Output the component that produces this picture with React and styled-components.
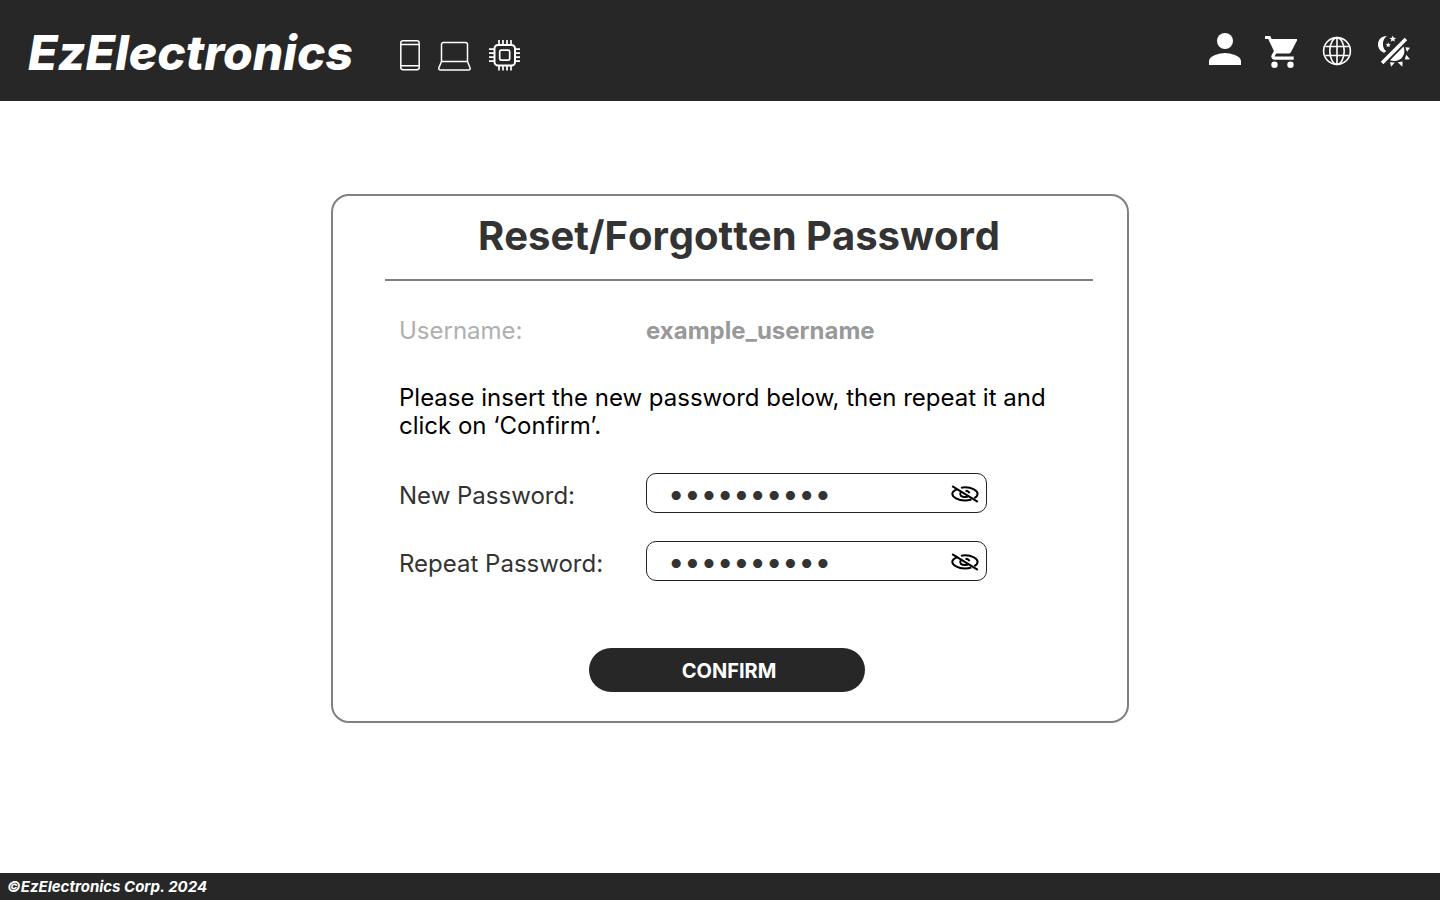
import React, { useState } from 'react';
import styled, { createGlobalStyle } from 'styled-components';

const GlobalStyle = createGlobalStyle`
  *, *::before, *::after { box-sizing: border-box; }
  body {
    margin: 0;
    background: #fff;
    color: #000;
    font-family: Inter, "Liberation Sans", sans-serif;
  }
  h1, p { margin: 0; }
`;

const Page = styled.div`
  min-height: 100vh;
  display: flex;
  flex-direction: column;
`;

const Header = styled.header`
  display: flex;
  align-items: center;
  min-height: 101px;
  padding: 4px 30px 0 28px;
  background: #272727;
`;

const Logo = styled.a`
  color: #fff;
  font-size: 48px;
  line-height: 58px;
  font-weight: 800;
  font-style: italic;
  text-decoration: none;
`;

const Categories = styled.nav`
  display: flex;
  gap: 18px;
  margin-left: 47px;
  padding-top: 6px;
`;

const CategoryLink = styled.a`
  display: flex;
  color: #fff;
`;

const Actions = styled.div`
  display: flex;
  gap: 24px;
  margin-left: auto;
  padding-bottom: 3px;
`;

const IconButton = styled.button`
  display: flex;
  padding: 0;
  border: 0;
  background: none;
  color: ${(p) => (p.$dark ? '#000' : '#fff')};
  cursor: pointer;
`;

const Main = styled.main`
  flex: 1;
  display: flex;
  justify-content: center;
  align-items: flex-start;
  padding: 93px 0 40px 20px;
`;

const Card = styled.section`
  width: 100%;
  max-width: 798px;
  padding: 16px 34px 29px 52px;
  border: 2px solid #808080;
  border-radius: 18px;
`;

const Title = styled.h1`
  padding-bottom: 19px;
  border-bottom: 2px solid #808080;
  color: #333;
  font-size: 40px;
  line-height: 48px;
  font-weight: 700;
  font-kerning: none;
  text-align: center;
`;

const Form = styled.form`
  display: flex;
  flex-direction: column;
  padding: 36px 14px 0;
  font-size: 24px;
  line-height: 28px;
`;

const Row = styled.div`
  display: grid;
  grid-template-columns: 247px 1fr;
`;

const Muted = styled.span`
  color: ${(p) => (p.$strong ? '#999' : '#b0b0b0')};
  font-weight: ${(p) => (p.$strong ? 700 : 400)};
`;

const Hint = styled.p`
  margin: 39px 0 33px;
`;

const Fields = styled.div`
  display: flex;
  flex-direction: column;
  gap: 28px;
`;

const Label = styled.label`
  padding-top: 9px;
  color: #333;
`;

const Field = styled.div`
  display: flex;
  align-items: center;
  width: 100%;
  max-width: 341px;
  height: 40px;
  padding: 2px 7px 0 21px;
  border: 1px solid #222;
  border-radius: 10px;
`;

const Input = styled.input`
  flex: 1;
  min-width: 0;
  padding: 0;
  border: 0;
  outline: 0;
  background: none;
  color: #333;
  font-family: inherit;
  font-size: 29px;
  line-height: 36px;
`;

const Confirm = styled.button`
  align-self: center;
  width: 276px;
  height: 44px;
  margin: 67px 24px 0 0;
  padding: 2px 0 0 4px;
  border: 0;
  border-radius: 22px;
  background: #272727;
  color: #fff;
  font-family: inherit;
  font-size: 20px;
  font-weight: 700;
  cursor: pointer;
`;

const Footer = styled.footer`
  padding: 4px 7px 3px;
  background: #272727;
  color: #fff;
  font-size: 15px;
  line-height: 20px;
  font-weight: 700;
  font-style: italic;
`;

const PhoneIcon = () => (
  <svg width="20" height="31" viewBox="0 0 20 31" fill="none" stroke="currentColor" strokeWidth="1.5">
    <rect x="0.8" y="0.8" width="18.4" height="29" rx="2.2" />
    <path d="M1 4.5h18M1 25.8h18" />
  </svg>
);

const LaptopIcon = () => (
  <svg width="33" height="31" viewBox="0 0 33 31" fill="none" stroke="currentColor" strokeWidth="1.5" strokeLinejoin="round">
    <path d="M3.500 21.500V4.500a2 2 0 0 1 2-2h22a2 2 0 0 1 2 2v17" />
    <path d="M3.500 21.500h26l2.500 6.200c.5 1.300-.2 2.300-1.400 2.300H2.400C1.200 30 .4 29 .9 27.700z" />
  </svg>
);

const ChipIcon = () => (
  <svg width="32" height="31" viewBox="0 0 32 31" fill="none" stroke="currentColor" strokeWidth="2">
    <rect x="5.500" y="5" width="20.500" height="20.500" rx="3.500" />
    <rect x="10.700" y="10.200" width="10" height="10" rx="1.500" strokeWidth="1.700" />
    <path strokeWidth="1.700" d="M10 0v5M14 0v5M18 0v5M22 0v5M10 25.500v5M14 25.500v5M18 25.500v5M22 25.500v5M0 9.200h5M0 13.200h5M0 17.200h5M0 21.200h5M26 9.200h5M26 13.200h5M26 17.200h5M26 21.200h5" />
  </svg>
);

const PersonIcon = () => (
  <svg width="32" height="36" viewBox="0 0 32 36" fill="currentColor">
    <circle cx="16" cy="8" r="8" />
    <path d="M0 32v-4c0-5.300 10.700-8 16-8s16 2.700 16 8v4z" />
  </svg>
);

const CartIcon = () => (
  <svg width="32" height="36" viewBox="0 0 32 36" fill="currentColor">
    <circle cx="9.500" cy="31.700" r="3.200" />
    <circle cx="25.500" cy="31.700" r="3.200" />
    <path d="M0 3v3h3.200l5.700 12-2.200 4c-1.200 2.200.4 4.800 2.800 4.800h19.200v-3.200H10.200a.4.4 0 0 1-.4-.6l1.400-2.400h12c1.200 0 2.200-.7 2.800-1.700L32 7.500V6H6.700L5.200 3z" />
  </svg>
);

const GlobeIcon = () => (
  <svg width="32" height="36" viewBox="0 0 32 36" fill="none" stroke="currentColor" strokeWidth="1.600">
    <circle cx="16" cy="18" r="13.400" />
    <ellipse cx="16" cy="18" rx="7.200" ry="13.400" />
    <path d="M16 4.600v26.800M4.300 13.500h23.400M4.300 22.500h23.400" />
  </svg>
);

const ThemeIcon = () => (
  <svg width="33" height="36" viewBox="-1 0 33 36" fill="currentColor">
    <path d="M9 3C3.500 2.800 0 6.800 0 11.500c0 4 2.700 7.200 6.200 8.200l2-1.700C3.800 15 3.600 6.500 9 3z" />
    <path d="M14.800 2.500l.9 2.300 2.500.1-2 1.500.7 2.400-2.100-1.400-2.100 1.400.7-2.400-2-1.500 2.500-.1z" />
    <path d="M10.200 9.300l.7 1.800 1.900.1-1.500 1.200.5 1.800-1.600-1-1.600 1 .5-1.800-1.500-1.200 1.900-.1z" />
    <path d="M26.700 4.700l2.500 2.500L5.300 31.300l-2.500-2.500z" />
    <path d="M25.500 13.500C29 22.500 21.500 30.500 12 27.300z" />
    <path d="M27.300 14.300l4.700.5-2.900 4zM28.200 21.800l3.800 4.500-5.200.1zM19.700 29.300l4.900-.8-.3 5.200zM12 29.200l4.800.3-3.700 4.300z" />
  </svg>
);

const EyeOffIcon = () => (
  <svg width="28" height="18" viewBox="0 0 28 18" fill="none" stroke="currentColor" strokeWidth="2">
    <path d="M1.200 1.200l25.600 15.600" />
    <path d="M10 2.900C11.200 2.500 12.600 2.300 14 2.300c7 0 12.600 3.200 12.600 6.500 0 1.800-1.300 3.300-3.400 4.400" />
    <path d="M6.200 4.200C3.300 5.300 1.300 7 1.300 8.800c0 3.400 5.700 6.700 12.700 6.700 2.300 0 4.500-.4 6.400-1" />
    <path d="M9.700 7.200c-1.600 2.800.6 4.900 4.300 4.900 1.600 0 3-.5 3.800-1.300M14.500 5.700c2 .2 3.600 1.200 4 2.500" />
  </svg>
);

function PasswordRow({ id, label }) {
  const [value, setValue] = useState('abcdefghij');
  const [shown, setShown] = useState(false);
  return (
    <Row>
      <Label htmlFor={id}>{label}</Label>
      <Field>
        <Input
          id={id}
          type={shown ? 'text' : 'password'}
          value={value}
          onChange={(e) => setValue(e.target.value)}
        />
        <IconButton type="button" $dark aria-label="Toggle visibility" onClick={() => setShown(!shown)}>
          <EyeOffIcon />
        </IconButton>
      </Field>
    </Row>
  );
}

export default function App() {
  return (
    <Page>
      <GlobalStyle />
      <Header>
        <Logo href="#home">EzElectronics</Logo>
        <Categories aria-label="Categories">
          <CategoryLink href="#smartphones" aria-label="Smartphones"><PhoneIcon /></CategoryLink>
          <CategoryLink href="#laptops" aria-label="Laptops"><LaptopIcon /></CategoryLink>
          <CategoryLink href="#components" aria-label="Components"><ChipIcon /></CategoryLink>
        </Categories>
        <Actions>
          <IconButton type="button" aria-label="Account"><PersonIcon /></IconButton>
          <IconButton type="button" aria-label="Cart"><CartIcon /></IconButton>
          <IconButton type="button" aria-label="Language"><GlobeIcon /></IconButton>
          <IconButton type="button" aria-label="Theme"><ThemeIcon /></IconButton>
        </Actions>
      </Header>
      <Main>
        <Card>
          <Title>Reset/Forgotten Password</Title>
          <Form onSubmit={(e) => e.preventDefault()}>
            <Row>
              <Muted>Username:</Muted>
              <Muted $strong>example_username</Muted>
            </Row>
            <Hint>Please insert the new password below, then repeat it and click on ‘Confirm’.</Hint>
            <Fields>
              <PasswordRow id="new-password" label="New Password:" />
              <PasswordRow id="repeat-password" label="Repeat Password:" />
            </Fields>
            <Confirm type="submit">CONFIRM</Confirm>
          </Form>
        </Card>
      </Main>
      <Footer>©EzElectronics Corp. 2024</Footer>
    </Page>
  );
}
